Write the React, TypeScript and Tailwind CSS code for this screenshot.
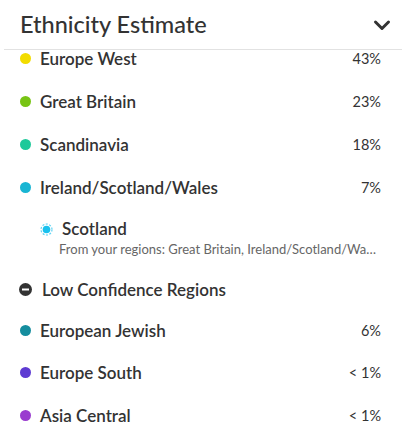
import React from 'react';

type Region = { name: string; color: string; pct: string; h: string };

const main: Region[] = [
  { name: 'Europe West', color: '#f2dc00', pct: '43%', h: 'h-[30px] items-start' },
  { name: 'Great Britain', color: '#78c414', pct: '23%', h: 'h-[43px] items-center' },
  { name: 'Scandinavia', color: '#1ec99a', pct: '18%', h: 'h-[43px] items-center' },
  { name: 'Ireland/Scotland/Wales', color: '#19b5d3', pct: '7%', h: 'h-[43px] items-center' },
];

const low: Region[] = [
  { name: 'European Jewish', color: '#158d9e', pct: '6%', h: 'h-[41px] items-center' },
  { name: 'Europe South', color: '#5e3bd2', pct: '< 1%', h: 'h-[43px] items-center' },
  { name: 'Asia Central', color: '#9a3ccf', pct: '< 1%', h: 'h-[43px] items-center' },
];

const Row = ({ r }: { r: Region }) => (
  <div className={`flex ${r.h} pl-[20px] pr-[21px]`}>
    <div className="flex items-center w-full h-[17px]">
      <span className="w-[11px] h-[11px] rounded-full shrink-0" style={{ backgroundColor: r.color }} />
      <span className="ml-[9px] text-[17px] leading-[17px] font-semibold text-[#333]">{r.name}</span>
      <span className="ml-auto text-[14.5px] leading-[17px] text-[#333]">{r.pct}</span>
    </div>
  </div>
);

export default function App() {
  return (
    <div className="w-[402px] h-[432px] bg-white overflow-hidden" style={{ fontFamily: 'Lato, "Open Sans", sans-serif' }}>
      <div className="h-[50px] bg-white flex items-center pl-[16px] pr-[10px] ml-[4px] border-b border-[#e2e2e2]">
        <h1 className="text-[23.5px] font-medium text-[#333] leading-none">Ethnicity Estimate</h1>
        <svg className="ml-auto mr-[1px]" width="18" height="14" viewBox="0 0 18 14" fill="none">
          <path d="M2.5 4 L9 10.5 L15.5 4" stroke="#333" strokeWidth="3" strokeLinecap="round" strokeLinejoin="round" />
        </svg>
      </div>
      <div>
        {main.map((r) => (
          <Row key={r.name} r={r} />
        ))}
        <div className="h-[60px] pt-[9px] pl-[40px] pr-[24px]">
          <div className="flex items-center h-[22px]">
            <svg width="13" height="13" viewBox="0 0 13 13" className="shrink-0">
              <circle cx="6.5" cy="6.5" r="5.5" fill="none" stroke="#5fd3f3" strokeWidth="1.2" strokeDasharray="2 1.5" />
              <circle cx="6.5" cy="6.5" r="3.8" fill="#19c1ee" />
            </svg>
            <span className="ml-[9px] text-[17px] font-semibold text-[#333]">Scotland</span>
          </div>
          <div className="ml-[19px] text-[13px] text-[#666] leading-[18px] truncate">
            From your regions: Great Britain, Ireland/Scotland/Wales
          </div>
        </div>
        <div className="flex items-center h-[41px] pl-[19px]">
          <svg width="13" height="13" viewBox="0 0 13 13" className="shrink-0">
            <circle cx="6.5" cy="6.5" r="6.5" fill="#333" />
            <rect x="3" y="5.5" width="7" height="2" fill="#fff" />
          </svg>
          <span className="ml-[10px] text-[17px] font-semibold text-[#333]">Low Confidence Regions</span>
        </div>
        {low.map((r) => (
          <Row key={r.name} r={r} />
        ))}
      </div>
    </div>
  );
}
